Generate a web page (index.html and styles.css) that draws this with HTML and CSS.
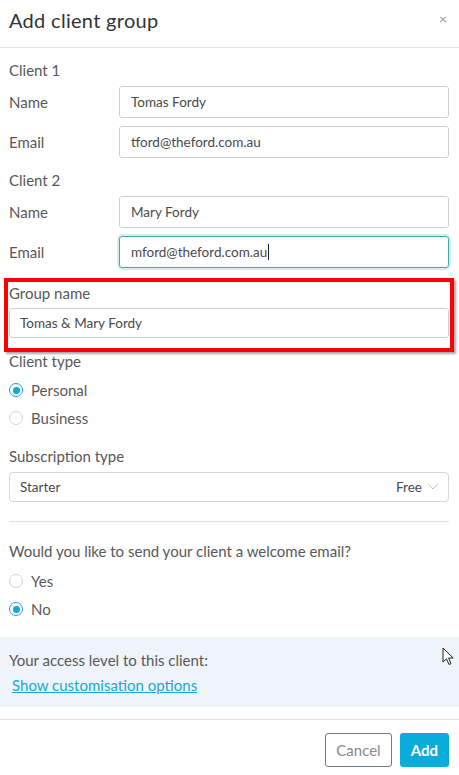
FILE: index.html
```html
<!DOCTYPE html>
<html>
<head>
<meta charset="utf-8">
<link rel="stylesheet" href="styles.css">
</head>
<body>
<div class="modal">
  <div class="header">
    <h1 class="title">Add client group</h1>
    <span class="close">×</span>
  </div>
  <div class="content">
    <div class="section-label first">Client 1</div>
    <div class="row">
      <label class="row-label">Name</label>
      <div class="input">Tomas Fordy</div>
    </div>
    <div class="row">
      <label class="row-label">Email</label>
      <div class="input">tford@theford.com.au</div>
    </div>
    <div class="section-label">Client 2</div>
    <div class="row">
      <label class="row-label">Name</label>
      <div class="input">Mary Fordy</div>
    </div>
    <div class="row">
      <label class="row-label">Email</label>
      <div class="input focused">mford@theford.com.au<span class="caret"></span></div>
    </div>
    <div class="group-label">Group name</div>
    <div class="input full">Tomas &amp; Mary Fordy</div>
    <div class="group-label type">Client type</div>
    <div class="radio-list">
      <div class="radio-row"><span class="radio checked"></span>Personal</div>
      <div class="radio-row"><span class="radio"></span>Business</div>
    </div>
    <div class="group-label sub">Subscription type</div>
    <div class="select">
      <span>Starter</span>
      <span class="select-right">Free
        <svg class="chev" width="10" height="6" viewBox="0 0 10 6"><path d="M0.5 0.5 L5 5 L9.5 0.5" fill="none" stroke="#c4c4c4" stroke-width="1"/></svg>
      </span>
    </div>
    <hr class="divider">
    <div class="question">Would you like to send your client a welcome email?</div>
    <div class="radio-list">
      <div class="radio-row"><span class="radio"></span>Yes</div>
      <div class="radio-row"><span class="radio checked"></span>No</div>
    </div>
  </div>
  <div class="access">
    <div class="access-text">Your access level to this client:</div>
    <a class="access-link" href="#">Show customisation options</a>
  </div>
  <div class="footer">
    <button class="btn cancel">Cancel</button>
    <button class="btn add">Add</button>
  </div>
</div>
<div class="highlight"></div>
<svg class="cursor" width="13" height="20" viewBox="0 0 13 20"><path d="M1 1 L1 15 L4.5 11.8 L7 17.5 L9 16.6 L6.6 11 L11.2 11 Z" fill="#fff" stroke="#222" stroke-width="1" stroke-linejoin="round"/></svg>
</body>
</html>
```
FILE: styles.css
```css
html, body {
  margin: 0;
  padding: 0;
  background: #fff;
}
body {
  font-family: "Lato", "Open Sans", sans-serif;
  color: #585858;
  font-size: 15px;
  width: 459px;
  position: relative;
}
.modal {
  width: 459px;
}
.header {
  height: 48px;
  border-bottom: 1px solid #e3e3e3;
  display: flex;
  align-items: center;
  justify-content: space-between;
  padding: 0 12px 0 9px;
  box-sizing: border-box;
}
.title {
  margin: 0;
  font-size: 20px;
  font-weight: 400;
  color: #333;
  letter-spacing: 0.3px;
  margin-top: -8px;
}
.close {
  font-size: 14px;
  color: #999;
  margin-top: -10px;
}
.content {
  padding: 0 10px 0 9px;
}
.section-label {
  height: 20px;
  line-height: 20px;
  margin-top: 12px;
}
.section-label.first {
  margin-top: 12px;
}
.row {
  display: grid;
  grid-template-columns: 110px 1fr;
  align-items: center;
  margin-top: 6px;
}
.row + .row {
  margin-top: 8px;
}
.row-label {
  line-height: 20px;
}
.input {
  height: 32px;
  box-sizing: border-box;
  border: 1px solid #cfcfcf;
  border-radius: 3px;
  padding: 0 11px;
  display: flex;
  align-items: center;
  font-size: 13.5px;
  color: #4a4a4a;
}
.input.focused {
  border-color: #3ea9a5;
  box-shadow: 0 0 0 2px #d6eeee;
}
.caret {
  display: inline-block;
  width: 1px;
  height: 16px;
  background: #222;
  margin-left: 1px;
}
.input.full {
  height: 30px;
  padding: 0 10px;
}
.group-label {
  height: 20px;
  line-height: 20px;
  margin-top: 15px;
  margin-bottom: 5px;
}
.group-label.type {
  margin-top: 13px;
  margin-bottom: 0;
}
.group-label.sub {
  margin-top: 18px;
  margin-bottom: 6px;
}
.radio-list {
  display: flex;
  flex-direction: column;
  gap: 8px;
  margin-top: 9px;
}
.radio-row {
  height: 20px;
  display: flex;
  align-items: center;
  gap: 8px;
  color: #5a5a5a;
}
.radio {
  width: 14px;
  height: 14px;
  border-radius: 50%;
  border: 1px solid #d6d6d6;
  box-sizing: border-box;
  display: inline-flex;
  align-items: center;
  justify-content: center;
  background: #fff;
}
.radio.checked {
  border: 1.5px solid #15a7d8;
}
.radio.checked::after {
  content: "";
  width: 7px;
  height: 7px;
  border-radius: 50%;
  background: #15a7d8;
}
.select {
  height: 30px;
  box-sizing: border-box;
  border: 1px solid #d6d6d6;
  border-radius: 4px;
  padding: 0 10px;
  display: flex;
  align-items: center;
  justify-content: space-between;
  font-size: 13.5px;
  color: #4a4a4a;
}
.select-right {
  display: flex;
  align-items: center;
  gap: 6px;
}
.divider {
  border: 0;
  border-top: 1px solid #e0e0e0;
  margin: 19px 0 0;
}
.question {
  height: 20px;
  line-height: 20px;
  margin-top: 19px;
}
.question + .radio-list {
  margin-top: 10px;
}
.access {
  margin-top: 18px;
  background: #eff4fb;
  height: 70px;
  box-sizing: border-box;
  padding: 13px 9px 0;
}
.access-text {
  line-height: 20px;
}
.access-link {
  display: inline-block;
  margin-top: 5px;
  margin-left: 3px;
  line-height: 20px;
  color: #1ba7d6;
  text-decoration: underline;
}
.footer {
  margin-top: 12px;
  border-top: 1px solid #e0e0e0;
  display: flex;
  justify-content: flex-end;
  gap: 8px;
  padding: 13px 10px 0 0;
}
.btn {
  height: 34px;
  border-radius: 3px;
  font-family: "Lato", "Open Sans", sans-serif;
  font-size: 15px;
  padding: 0;
}
.cancel {
  width: 67px;
  background: #fff;
  border: 1px solid #6f7b86;
  color: #8a8a8a;
}
.add {
  width: 49px;
  background: #0aacd9;
  border: 0;
  color: #fff;
  font-weight: 700;
}
.highlight {
  position: absolute;
  left: 4px;
  top: 278px;
  width: 450px;
  height: 74px;
  box-sizing: border-box;
  border: 4px solid #ff0000;
  box-shadow: 2px 2px 2px rgba(0, 0, 0, 0.35);
  pointer-events: none;
}
.cursor {
  position: absolute;
  left: 442px;
  top: 647px;
}
```
